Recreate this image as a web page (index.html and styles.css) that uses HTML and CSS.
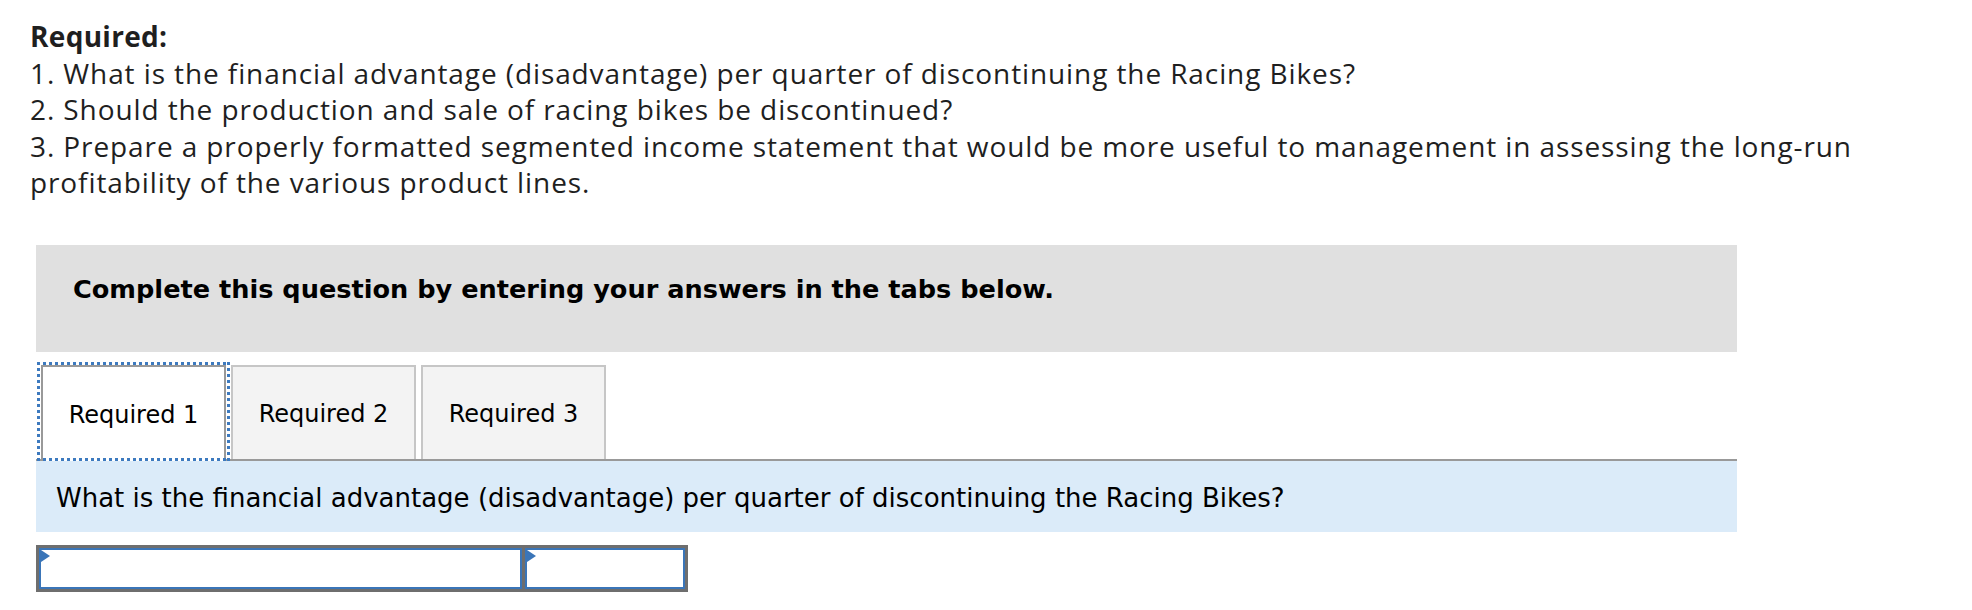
FILE: index.html
```html
<!DOCTYPE html>
<html>
<head>
<meta charset="utf-8">
<link rel="stylesheet" href="styles.css">
</head>
<body>
<div class="page">
  <div class="required">
    <div class="req-title">Required:</div>
    <div>1. What is the financial advantage (disadvantage) per quarter of discontinuing the Racing Bikes?</div>
    <div>2. Should the production and sale of racing bikes be discontinued?</div>
    <div>3. Prepare a properly formatted segmented income statement that would be more useful to management in assessing the long-run profitability of the various product lines.</div>
  </div>

  <div class="panel">
    <div class="instruct">Complete this question by entering your answers in the tabs below.</div>

    <div class="tabs">
      <div class="tab active"><span>Required 1</span></div>
      <div class="tab"><span>Required 2</span></div>
      <div class="tab"><span>Required 3</span></div>
    </div>

    <div class="question">What is the financial advantage (disadvantage) per quarter of discontinuing the Racing Bikes?</div>

    <div class="answer">
      <div class="cell wide"></div>
      <div class="cell narrow"></div>
    </div>
  </div>
</div>
</body>
</html>
```

FILE: styles.css
```css
html, body {
  margin: 0;
  padding: 0;
  background: #ffffff;
}

.page {
  padding: 18px 0 0 0;
}

.required {
  padding-left: 30px;
  width: 1840px;
  font-family: "Open Sans", "Liberation Sans", sans-serif;
  font-size: 28px;
  letter-spacing: 0.9px;
  line-height: 36.5px;
  color: #1f1f1f;
}

.req-title {
  font-weight: 700;
  letter-spacing: 0.3px;
}

.panel {
  margin-top: 44px;
  margin-left: 36px;
  width: 1701px;
  font-family: "DejaVu Sans", Verdana, sans-serif;
  color: #000000;
}

.instruct {
  background: #e0e0e0;
  height: 107px;
  box-sizing: border-box;
  padding-left: 37px;
  padding-top: 28px;
  font-weight: 700;
  font-size: 25.6px;
  line-height: 32px;
}

.tabs {
  margin-top: 11px;
  display: flex;
  align-items: flex-end;
  border-bottom: 2px solid #999999;
  height: 98px;
  box-sizing: border-box;
}

.tab {
  height: 94px;
  box-sizing: border-box;
  display: flex;
  align-items: center;
  justify-content: center;
  background: #f3f3f3;
  border: 2px solid #c6c6c6;
  border-bottom: none;
  font-size: 24px;
  margin-right: 5px;
  width: 185px;
  padding-top: 2px;
}

.tab.active {
  position: relative;
  background: #ffffff;
  border: 2px solid #999999;
  border-bottom: none;
  width: 185px;
  margin-left: 5px;
  margin-right: 5px;
  height: 96px;
  margin-bottom: -2px;
}

.tab.active::after {
  content: "";
  position: absolute;
  left: -6px;
  right: -6px;
  top: -5px;
  bottom: 0;
  pointer-events: none;
  background:
    repeating-linear-gradient(90deg, #3d7abf 0 3px, transparent 3px 6px) left top / 100% 3px no-repeat,
    repeating-linear-gradient(90deg, #3d7abf 0 3px, transparent 3px 6px) left bottom / 100% 3px no-repeat,
    repeating-linear-gradient(180deg, #3d7abf 0 3px, transparent 3px 6px) left top / 3px 100% no-repeat,
    repeating-linear-gradient(180deg, #3d7abf 0 3px, transparent 3px 6px) right top / 3px 100% no-repeat;
}

.question {
  background: #dbebf9;
  height: 71px;
  box-sizing: border-box;
  padding-left: 20px;
  display: flex;
  align-items: center;
  font-size: 26px;
  padding-top: 4px;
}

.answer {
  margin-top: 13px;
  display: flex;
  width: 652px;
  height: 47px;
  box-sizing: border-box;
  border: 3px solid #6e6e6e;
  background: #6e6e6e;
  gap: 3px;
}

.cell {
  position: relative;
  background: #ffffff;
  border: 2px solid #3a75b8;
  box-sizing: border-box;
  height: 100%;
}

.cell::before {
  content: "";
  position: absolute;
  left: 0;
  top: 0;
  width: 0;
  height: 0;
  border-top: 6px solid transparent;
  border-bottom: 6px solid transparent;
  border-left: 9px solid #3a75b8;
}

.cell.wide {
  width: 483px;
}

.cell.narrow {
  flex: 1;
}
```
